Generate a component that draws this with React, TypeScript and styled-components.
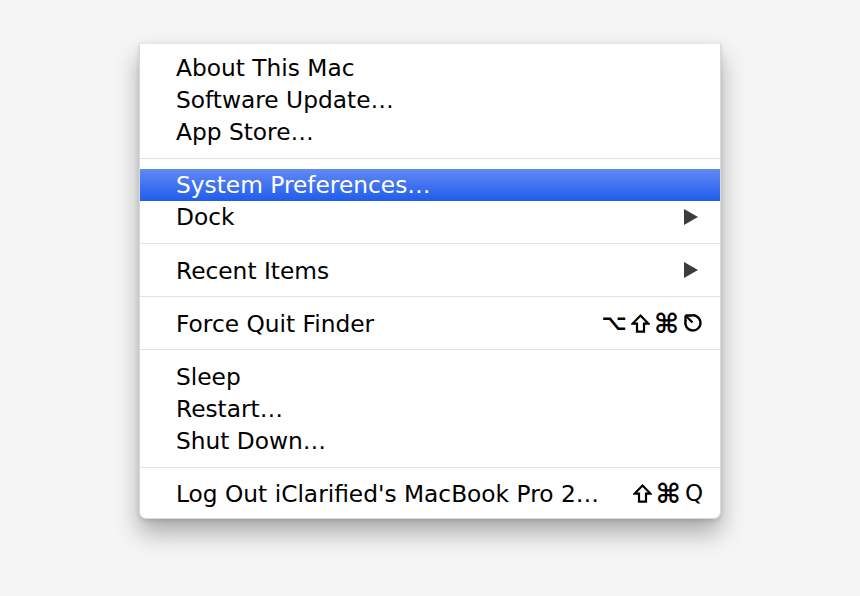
import styled, { createGlobalStyle } from "styled-components";

const GlobalStyle = createGlobalStyle`
  html, body {
    margin: 0;
    padding: 0;
    background: #f5f5f5;
  }
  body {
    font-family: "DejaVu Sans", "Liberation Sans", sans-serif;
  }
`;

const Page = styled.div`
  width: 860px;
  height: 596px;
  display: flex;
  justify-content: center;
  padding-top: 43px;
  box-sizing: border-box;
`;

const Menu = styled.div`
  width: 582px;
  height: 476px;
  box-sizing: border-box;
  padding: 7px 0 9px;
  background: #fff;
  border: 1px solid #d9d9d9;
  border-top-color: #e8e8e8;
  border-radius: 0 0 7px 7px;
  box-shadow: 0 14px 24px rgba(0, 0, 0, 0.3), 0 2px 5px rgba(0, 0, 0, 0.12);
`;

const Item = styled.div<{ $active?: boolean }>`
  height: 32.2px;
  display: flex;
  align-items: center;
  justify-content: space-between;
  padding: 0 17px 0 36px;
  font-size: 23.3px;
  color: ${(p) => (p.$active ? "#fff" : "#000")};
  background: ${(p) =>
    p.$active ? "linear-gradient(#6389f4, #1f5deb)" : "transparent"};
  white-space: nowrap;
`;

const Separator = styled.div`
  height: 1px;
  margin: 10px 0;
  background: #e2e2e2;
`;

const Shortcut = styled.span`
  display: flex;
  align-items: center;
  gap: 4px;
`;

const Key = styled.span<{ $size?: number; $bold?: boolean }>`
  font-size: ${(p) => p.$size ?? 22}px;
  line-height: 1;
  font-weight: ${(p) => (p.$bold ? 600 : 400)};
`;

const Arrow = styled.span`
  width: 0;
  height: 0;
  margin-right: 5px;
  border-top: 8px solid transparent;
  border-bottom: 8px solid transparent;
  border-left: 14px solid #3c3c3c;
`;

const ShiftIcon = () => (
  <svg width="19" height="19" viewBox="0 0 19 19" fill="none" stroke="#000" strokeWidth="2.2">
    <path d="M9.5 1.6 L17.3 9.6 H13 V17.6 H6 V9.6 H1.7 Z" />
  </svg>
);

const EscIcon = () => (
  <svg width="20" height="20" viewBox="0 0 20 20" fill="none" stroke="#000" strokeWidth="2.3">
    <path d="M7.2 2.8 A7.6 7.6 0 1 1 2.8 7.2" />
    <path d="M2.5 2.5 L9.5 9.5" />
    <path d="M2.5 2.5 L2.5 8 M2.5 2.5 L8 2.5" />
  </svg>
);

type Entry =
  | { kind: "sep" }
  | { kind: "item"; label: string; active?: boolean; submenu?: boolean; shortcut?: "force" | "logout" };

const entries: Entry[] = [
  { kind: "item", label: "About This Mac" },
  { kind: "item", label: "Software Update…" },
  { kind: "item", label: "App Store…" },
  { kind: "sep" },
  { kind: "item", label: "System Preferences…", active: true },
  { kind: "item", label: "Dock", submenu: true },
  { kind: "sep" },
  { kind: "item", label: "Recent Items", submenu: true },
  { kind: "sep" },
  { kind: "item", label: "Force Quit Finder", shortcut: "force" },
  { kind: "sep" },
  { kind: "item", label: "Sleep" },
  { kind: "item", label: "Restart…" },
  { kind: "item", label: "Shut Down…" },
  { kind: "sep" },
  { kind: "item", label: "Log Out iClarified's MacBook Pro 2…", shortcut: "logout" },
];

const App = () => (
  <>
    <GlobalStyle />
    <Page>
      <Menu>
        {entries.map((e, i) =>
          e.kind === "sep" ? (
            <Separator key={i} />
          ) : (
            <Item key={i} $active={e.active}>
              <span>{e.label}</span>
              {e.submenu && <Arrow />}
              {e.shortcut === "force" && (
                <Shortcut>
                  <Key $size={22} $bold>⌥</Key>
                  <ShiftIcon />
                  <Key $size={27} $bold>⌘</Key>
                  <EscIcon />
                </Shortcut>
              )}
              {e.shortcut === "logout" && (
                <Shortcut>
                  <ShiftIcon />
                  <Key $size={27} $bold>⌘</Key>
                  <Key $size={23}>Q</Key>
                </Shortcut>
              )}
            </Item>
          )
        )}
      </Menu>
    </Page>
  </>
);

export default App;
